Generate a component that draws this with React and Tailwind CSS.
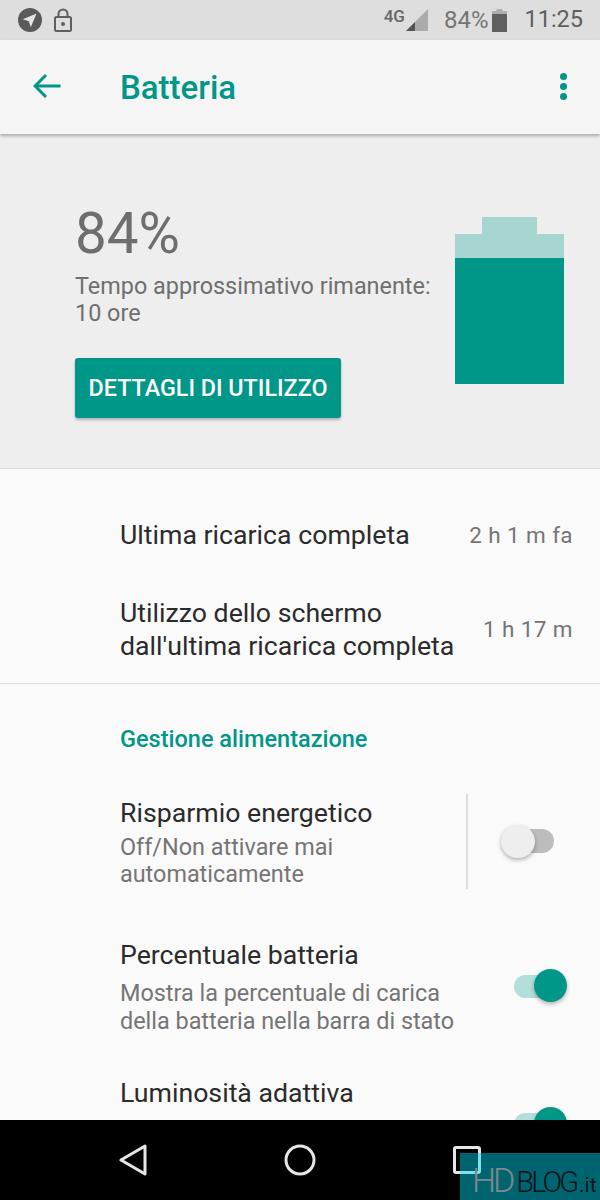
import React from 'react'

const font = { fontFamily: 'Roboto, sans-serif' }

const Toggle = ({ on }) => {
  if (on) {
    return (
      <div className="relative w-[53px] h-[34px] shrink-0">
        <div className="absolute left-0 top-[6px] w-[40px] h-[23px] rounded-full bg-[#b2dfdb]" />
        <div className="absolute right-0 top-0 w-[33px] h-[33px] rounded-full bg-[#009688] shadow-[0_2px_4px_rgba(0,0,0,0.3)]" />
      </div>
    )
  }
  return (
    <div className="relative w-[53px] h-[34px] shrink-0">
      <div className="absolute right-0 top-[4px] w-[40px] h-[24px] rounded-full bg-[#bdbdbd]" />
      <div className="absolute left-0 top-0 w-[34px] h-[33px] rounded-full bg-[#eeeeee] shadow-[0_2px_4px_rgba(0,0,0,0.3)]" />
    </div>
  )
}

const App = () => {
  return (
    <div className="relative w-[600px] h-[1200px] flex flex-col overflow-hidden bg-[#fafafa] font-['Roboto',sans-serif]" style={font}>
      {/* Status bar */}
      <div className="h-[40px] shrink-0 bg-[#dedede] flex items-center pl-[18px] pr-[17px] text-[#6b6b6b]">
        <svg width="24" height="24" viewBox="0 0 24 24">
          <circle cx="12" cy="12" r="12" fill="#5a5a5a" />
          <path d="M18.5 5.5 L4.8 11.2 L10.8 13.2 L12.8 19.2 Z" fill="#e4e4e4" />
        </svg>
        <svg className="ml-[12px]" width="18" height="24" viewBox="0 0 18 24" fill="none">
          <rect x="1" y="9" width="16" height="14" rx="1.5" stroke="#5f5f5f" strokeWidth="2" />
          <path d="M4.5 9 V6 a4.5 4.5 0 0 1 9 0 V9" stroke="#5f5f5f" strokeWidth="2" />
          <circle cx="9" cy="16" r="2" fill="#5f5f5f" />
        </svg>
        <div className="ml-auto flex items-center">
          <span className="text-[17px] font-medium mb-[7px] mr-[1px] text-[#666666]">4G</span>
          <svg width="22" height="22" viewBox="0 0 22 22">
            <path d="M0 22 L22 0 V22 Z" fill="#ababab" />
            <path d="M0 22 L9 13 V22 Z" fill="#555555" />
          </svg>
          <span className="ml-[16px] text-[24px] text-[#757575]">84%</span>
          <svg className="ml-[4px]" width="15" height="23" viewBox="0 0 15 23">
            <path d="M4.5 0 H10.5 V2 H15 V5 H0 V2 H4.5 Z" fill="#adadad" />
            <rect x="0" y="5" width="15" height="18" fill="#5f5f5f" />
          </svg>
          <span className="ml-[17px] text-[23.5px] text-[#5f5f5f]">11:25</span>
        </div>
      </div>

      {/* App bar */}
      <div className="relative z-10 h-[94px] shrink-0 bg-[#f5f5f5] shadow-[0_2px_3px_rgba(0,0,0,0.28)] flex items-center pl-[33px] pr-[33px]">
        <svg width="28" height="26" viewBox="0 0 28 26" fill="none" className="-mt-[2px]">
          <path d="M27.5 13 H2.5 M13 2 L2 13 L13 24" stroke="#009688" strokeWidth="3" />
        </svg>
        <h1 className="ml-[59px] text-[33px] leading-none font-medium text-[#009688]">Batteria</h1>
        <div className="ml-auto flex flex-col gap-[3px] -mt-[2px]">
          <div className="w-[7px] h-[7px] rounded-full bg-[#009688]" />
          <div className="w-[7px] h-[7px] rounded-full bg-[#009688]" />
          <div className="w-[7px] h-[7px] rounded-full bg-[#009688]" />
        </div>
      </div>

      {/* Hero */}
      <div className="h-[335px] shrink-0 bg-[#eeeeee] border-b border-[#dcdcdc] flex justify-between pl-[75px] pr-[36px]">
        <div className="pt-[64px]">
          <div className="text-[56.5px] leading-[72px] text-[#6e6e6e]">84%</div>
          <p className="mt-[3px] text-[23.4px] leading-[27px] text-[#6f6f6f]">
            Tempo approssimativo rimanente:<br />10 ore
          </p>
          <button className="mt-[31px] w-[266px] h-[60px] rounded-[3px] bg-[#009688] text-white text-[23.3px] font-medium shadow-[0_2px_3px_rgba(0,0,0,0.25)]">
            DETTAGLI DI UTILIZZO
          </button>
        </div>
        <div className="pt-[83px] flex flex-col items-center">
          <div className="w-[55px] h-[17px] bg-[#a7d5d0]" />
          <div className="w-[109px] h-[24px] bg-[#a7d5d0]" />
          <div className="w-[109px] h-[126px] bg-[#009688]" />
        </div>
      </div>

      {/* Content */}
      <div className="flex-1 min-h-0 overflow-hidden">
        <div className="border-b border-[#dcdcdc] h-[215px] pl-[120px] pr-[27px]">
          <div className="flex items-center justify-between pt-[48px]">
            <span className="text-[26.7px] leading-[34px] text-[#2b2b2b]">Ultima ricarica completa</span>
            <span className="text-[22.5px] text-[#757575] tracking-[0.4px] mt-[2px]">2 h 1 m fa</span>
          </div>
          <div className="flex items-center justify-between mt-[44px]">
            <span className="text-[26.7px] leading-[33px] text-[#2b2b2b]">Utilizzo dello schermo<br />dall'ultima ricarica completa</span>
            <span className="text-[22.5px] text-[#757575] tracking-[0.4px]">1 h 17 m</span>
          </div>
        </div>

        <h2 className="pl-[120px] pt-[41px] text-[23.5px] leading-[28px] font-medium text-[#009688]">Gestione alimentazione</h2>

        <div className="flex mt-[41px] pl-[120px] h-[96px]">
          <div className="flex-1 pt-[2px]">
            <div className="text-[26.7px] leading-[34px] text-[#2b2b2b]">Risparmio energetico</div>
            <div className="text-[23.4px] leading-[27px] text-[#757575] mt-[4px]">Off/Non attivare mai<br />automaticamente</div>
          </div>
          <div className="w-[2px] h-[95px] bg-[#dcdcdc]" />
          <div className="w-[132px] pl-[33px] pt-[31px]"><Toggle /></div>
        </div>

        <div className="flex mt-[48px] pl-[120px] pr-[33px] justify-between">
          <div>
            <div className="text-[26.7px] leading-[34px] text-[#2b2b2b]">Percentuale batteria</div>
            <div className="text-[23.4px] leading-[28px] text-[#757575] mt-[7px]">Mostra la percentuale di carica<br />della batteria nella barra di stato</div>
          </div>
          <div className="pt-[31px]"><Toggle on /></div>
        </div>

        <div className="flex mt-[41px] pl-[120px] pr-[33px] justify-between">
          <div className="text-[26.7px] leading-[34px] text-[#2b2b2b]">Luminosità adattiva</div>
          <div className="pt-[31px]"><Toggle on /></div>
        </div>
      </div>

      {/* Nav bar */}
      <div className="relative z-10 h-[80px] shrink-0 bg-black flex items-center pl-[119px]">
        <svg width="28" height="36" viewBox="0 0 28 36" fill="none">
          <path d="M26 4 V32 L2 18 Z" stroke="#e6e6e6" strokeWidth="3" strokeLinejoin="round" />
        </svg>
        <svg className="ml-[137px]" width="32" height="32" viewBox="0 0 32 32" fill="none">
          <circle cx="16" cy="16" r="14" stroke="#e6e6e6" strokeWidth="3" />
        </svg>
        <svg className="ml-[137px]" width="28" height="28" viewBox="0 0 28 28" fill="none">
          <rect x="1.5" y="1.5" width="25" height="25" rx="1.5" stroke="#e6e6e6" strokeWidth="3" />
        </svg>
      </div>

      {/* Watermark */}
      <div className="absolute z-20 left-[460px] top-[1153px] w-[140px] h-[47px] bg-[#00dff8]/45 flex items-baseline pl-[12px] pt-[10px] overflow-hidden">
        <span className="text-[34px] leading-none font-light text-[#7f8a8c] tracking-[-3px]">HD</span>
        <span className="ml-[4px] text-[29px] leading-none font-light text-[#021318] tracking-[-3px]">BLOG</span>
        <span className="text-[21px] leading-none text-[#021318] ml-[3px]">.it</span>
      </div>
    </div>
  )
}

export default App
